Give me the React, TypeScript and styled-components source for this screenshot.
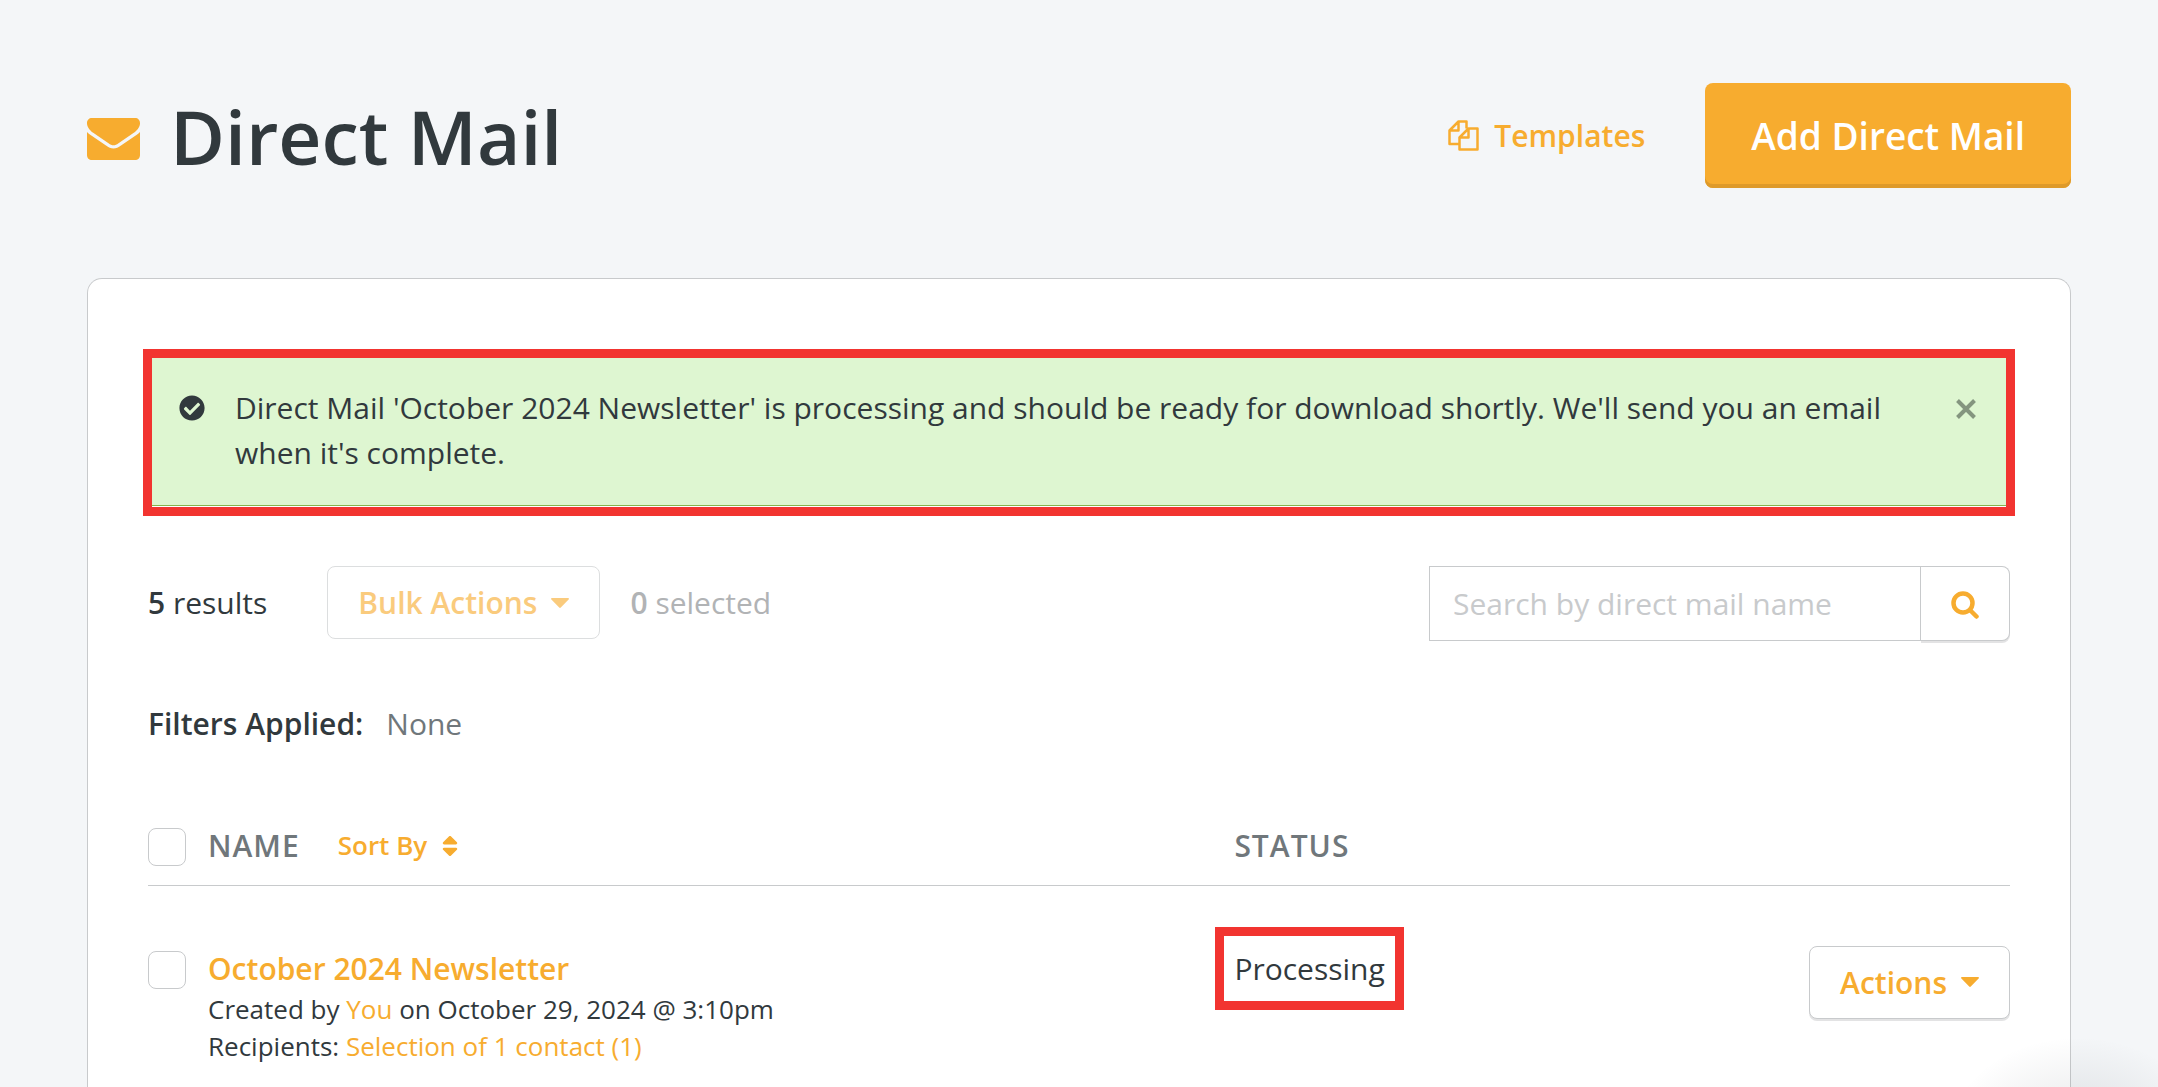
import React from 'react';
import styled, { createGlobalStyle, css } from 'styled-components';
import { FaCheckCircle, FaSort } from 'react-icons/fa';

const amber = '#f7ac2f';
const ink = '#31393d';
const muted = '#70777b';
const line = '#c8cacc';
const callout = '#f23430';

const GlobalStyle = createGlobalStyle`
  *, *::before, *::after { box-sizing: border-box; }
  body {
    margin: 0;
    background: #f4f6f8;
    color: ${ink};
    font-family: 'Open Sans', 'Noto Sans', sans-serif;
    font-size: 30px;
    line-height: 45px;
  }
  button, input { font: inherit; color: inherit; margin: 0; }
  button { cursor: pointer; }
  a { color: ${amber}; text-decoration: none; }
`;

const Page = styled.div`
  position: relative;
  display: flex;
  flex-direction: column;
  min-height: 100vh;
  padding: 0 87px;
  overflow: hidden;
`;

const PageHeader = styled.header`
  display: flex;
  align-items: center;
  justify-content: space-between;
  padding: 83px 0 90px;
`;

const Title = styled.h1`
  display: flex;
  align-items: center;
  gap: 30px;
  margin: 0;
  font-size: 75px;
  line-height: 104px;
  font-weight: 600;
`;

const TitleIcon = styled.span`
  display: flex;
  padding-top: 6px;
  color: ${amber};
`;

const HeaderActions = styled.div`
  display: flex;
  align-items: center;
  gap: 60px;
`;

const TemplatesLink = styled.a`
  display: flex;
  align-items: center;
  gap: 15px;
  font-weight: 600;
`;

const AddButton = styled.button`
  height: 105px;
  padding: 0 46px;
  border: 0;
  border-radius: 8px;
  background: ${amber};
  box-shadow: inset 0 -4px 0 #de9a2a;
  color: #fff;
  font-size: 37px;
  font-weight: 600;
`;

const Card = styled.main`
  flex: 1;
  padding: 70px 60px 0;
  background: #fff;
  border: 1px solid ${line};
  border-bottom: 0;
  border-radius: 15px 15px 0 0;
`;

const Alert = styled.div`
  display: flex;
  align-items: flex-start;
  gap: 30px;
  margin: 0 -5px;
  padding: 27px 29px 32px 27px;
  border: 9px solid ${callout};
  background: #def6d1;
  box-shadow: inset 0 -1px 0 #fff, inset 0 -2px 0 #86b34c;
`;

const AlertIcon = styled.span`
  display: flex;
  align-items: center;
  height: 45px;
`;

const AlertText = styled.p`
  flex: 1;
  margin: 0;
`;

const CloseButton = styled.button`
  display: flex;
  align-items: center;
  height: 48px;
  padding: 0;
  border: 0;
  background: none;
  color: #84957f;
`;

const Toolbar = styled.div`
  display: flex;
  align-items: flex-start;
  justify-content: space-between;
  margin-top: 50px;
`;

const ToolbarGroup = styled.div`
  display: flex;
  align-items: center;
`;

const Strong = styled.strong`
  font-weight: 600;
`;

const Selected = styled.span`
  margin-left: 30px;
  color: #b1b3b5;
`;

const MenuButton = styled.button`
  display: inline-flex;
  align-items: center;
  gap: 14px;
  height: 73px;
  padding: 0 30px;
  border: 1px solid ${line};
  border-radius: 8px;
  background: #fff;
  box-shadow: 0 2px 0 #e3e3e4;
  color: ${amber};
  font-weight: 600;
  &:disabled {
    color: ${amber};
    opacity: 0.62;
    box-shadow: none;
    cursor: default;
  }
`;

const BulkWrap = styled.div`
  display: flex;
  margin-left: 60px;
`;

const SearchForm = styled.form`
  display: flex;
  width: 581px;
`;

const SearchInput = styled.input`
  flex: 1;
  min-width: 0;
  height: 75px;
  padding: 0 23px;
  border: 1px solid ${line};
  border-radius: 0;
  background: #fff;
  &::placeholder { color: #c8cacc; opacity: 1; }
`;

const SearchButton = styled.button`
  display: flex;
  align-items: center;
  justify-content: center;
  width: 89px;
  height: 75px;
  padding: 2px 0 0;
  border: 1px solid ${line};
  border-left: 0;
  border-radius: 0 8px 8px 0;
  background: #fff;
  box-shadow: 0 2px 0 #e3e3e4;
  color: ${amber};
`;

const Filters = styled.div`
  display: flex;
  gap: 23px;
  margin-top: 60px;
`;

const FilterValue = styled.span`
  color: ${muted};
`;

const Table = styled.table`
  width: 100%;
  margin-top: 77px;
  border-collapse: collapse;
  table-layout: fixed;
`;

const cell = css`
  padding: 0;
  text-align: left;
  vertical-align: top;
`;

const HeadCell = styled.th<{ $width?: string }>`
  ${cell}
  width: ${(p) => p.$width ?? 'auto'};
  height: 62px;
  border-bottom: 1px solid ${line};
  color: ${muted};
  font-weight: 600;
  letter-spacing: 1px;
`;

const Cell = styled.td<{ $top: number }>`
  ${cell}
  padding-top: ${(p) => p.$top}px;
`;

const ActionCell = styled(Cell)`
  text-align: right;
`;

const HeadContent = styled.div`
  display: flex;
  align-items: center;
  gap: 38px;
`;

const CheckLabel = styled.label`
  display: flex;
  padding-top: 5px;
`;

const Checkbox = styled.input`
  appearance: none;
  width: 38px;
  height: 38px;
  margin: 0;
  border: 1px solid ${line};
  border-radius: 8px;
  background: #fff;
`;

const SortButton = styled.button`
  display: flex;
  align-items: center;
  gap: 10px;
  padding: 0;
  border: 0;
  background: none;
  color: ${amber};
  font-size: 26px;
  line-height: 45px;
  font-weight: 600;
`;

const MailName = styled.a`
  display: block;
  font-weight: 600;
`;

const Detail = styled.div`
  font-size: 26px;
  line-height: 37px;
`;

const Status = styled.span`
  display: inline-block;
  margin: -19px;
  padding: 10px;
  border: 9px solid ${callout};
`;

const LauncherGlow = styled.div`
  position: absolute;
  right: -50px;
  bottom: -150px;
  width: 260px;
  height: 200px;
  pointer-events: none;
  background: radial-gradient(closest-side, rgba(40, 50, 60, 0.12), rgba(40, 50, 60, 0));
`;

const MailIcon = () => (
  <svg width="53" height="42" viewBox="0 0 53 42" fill="currentColor" aria-hidden="true">
    <path d="M0 5.2C0 2 2 0 5 0h43c3 0 5 2 5 5.200c0 3.800-2.800 7.200-6.200 9.600L31.500 25.200c-2 1.400-3.200 2-5 2s-3-.6-5-2L6.200 14.800C2.800 12.400 0 9 0 5.200z" />
    <path d="M0 14c1 1 2 1.900 3.200 2.700L19 27.600c2.600 1.800 4.800 2.900 7.500 2.900s4.900-1.100 7.500-2.900l15.800-10.900C51 15.900 52 15 53 14v23c0 3-2 5-5 5H5c-3 0-5-2-5-5V14z" />
  </svg>
);

const CopyIcon = () => (
  <svg width="31" height="31" viewBox="0 0 31 31" fill="none" stroke="currentColor" strokeWidth="2.500" strokeLinejoin="round" aria-hidden="true">
    <path d="M11.500 24H1.500V10.500l9-9h8v7M10.500 1.500v9h-9M11.500 17.500l9-9h9v21h-18v-12zM20.500 8.500v9h-9" />
  </svg>
);

const CloseIcon = () => (
  <svg width="22" height="22" viewBox="0 0 22 22" stroke="currentColor" strokeWidth="4" aria-hidden="true">
    <path d="M2.500 2.500l17 17M19.500 2.500l-17 17" />
  </svg>
);

const SearchIcon = () => (
  <svg width="28" height="28" viewBox="0 0 28 28" fill="none" stroke="currentColor" strokeWidth="4.500" strokeLinecap="round" aria-hidden="true">
    <circle cx="12" cy="12" r="9.500" />
    <path d="M19 19l6.500 6.500" />
  </svg>
);

const Caret = () => (
  <svg width="18" height="10" viewBox="0 0 18 10" fill="currentColor" aria-hidden="true">
    <path d="M1 0h16c1 0 1.300 1 .6 1.600L9.800 9.500c-.5.500-1.100.5-1.600 0L.4 1.600C-.3 1 0 0 1 0z" />
  </svg>
);

export default function App() {
  return (
    <>
      <GlobalStyle />
      <Page>
        <PageHeader>
          <Title>
            <TitleIcon><MailIcon /></TitleIcon>
            Direct Mail
          </Title>
          <HeaderActions>
            <TemplatesLink href="#templates"><CopyIcon />Templates</TemplatesLink>
            <AddButton type="button">Add Direct Mail</AddButton>
          </HeaderActions>
        </PageHeader>
        <Card>
          <Alert role="status">
            <AlertIcon><FaCheckCircle size={26} /></AlertIcon>
            <AlertText>
              Direct Mail 'October 2024 Newsletter' is processing and should be ready for download shortly. We'll send you an email when it's complete.
            </AlertText>
            <CloseButton type="button" aria-label="Dismiss"><CloseIcon /></CloseButton>
          </Alert>
          <Toolbar>
            <ToolbarGroup>
              <span><Strong>5</Strong> results</span>
              <BulkWrap>
                <MenuButton type="button" disabled>Bulk Actions <Caret /></MenuButton>
              </BulkWrap>
              <Selected><Strong>0</Strong> selected</Selected>
            </ToolbarGroup>
            <SearchForm role="search" onSubmit={(e) => e.preventDefault()}>
              <SearchInput type="text" aria-label="Search by direct mail name" placeholder="Search by direct mail name" />
              <SearchButton type="submit" aria-label="Search"><SearchIcon /></SearchButton>
            </SearchForm>
          </Toolbar>
          <Filters>
            <Strong>Filters Applied:</Strong>
            <FilterValue>None</FilterValue>
          </Filters>
          <Table>
            <thead>
              <tr>
                <HeadCell $width="60px">
                  <CheckLabel><Checkbox type="checkbox" aria-label="Select all" /></CheckLabel>
                </HeadCell>
                <HeadCell>
                  <HeadContent>
                    NAME
                    <SortButton type="button">Sort By <FaSort size={26} /></SortButton>
                  </HeadContent>
                </HeadCell>
                <HeadCell $width="22%">STATUS</HeadCell>
                <HeadCell $width="366px" aria-label="Actions" />
              </tr>
            </thead>
            <tbody>
              <tr>
                <Cell $top={60}>
                  <CheckLabel><Checkbox type="checkbox" aria-label="Select October 2024 Newsletter" /></CheckLabel>
                </Cell>
                <Cell $top={60}>
                  <MailName href="#october">October 2024 Newsletter</MailName>
                  <Detail>Created by <a href="#you">You</a> on October 29, 2024 @ 3:10pm</Detail>
                  <Detail>Recipients: <a href="#recipients">Selection of 1 contact (1)</a></Detail>
                </Cell>
                <Cell $top={60}><Status>Processing</Status></Cell>
                <ActionCell $top={60}>
                  <MenuButton type="button">Actions <Caret /></MenuButton>
                </ActionCell>
              </tr>
            </tbody>
          </Table>
        </Card>
        <LauncherGlow />
      </Page>
    </>
  );
}
